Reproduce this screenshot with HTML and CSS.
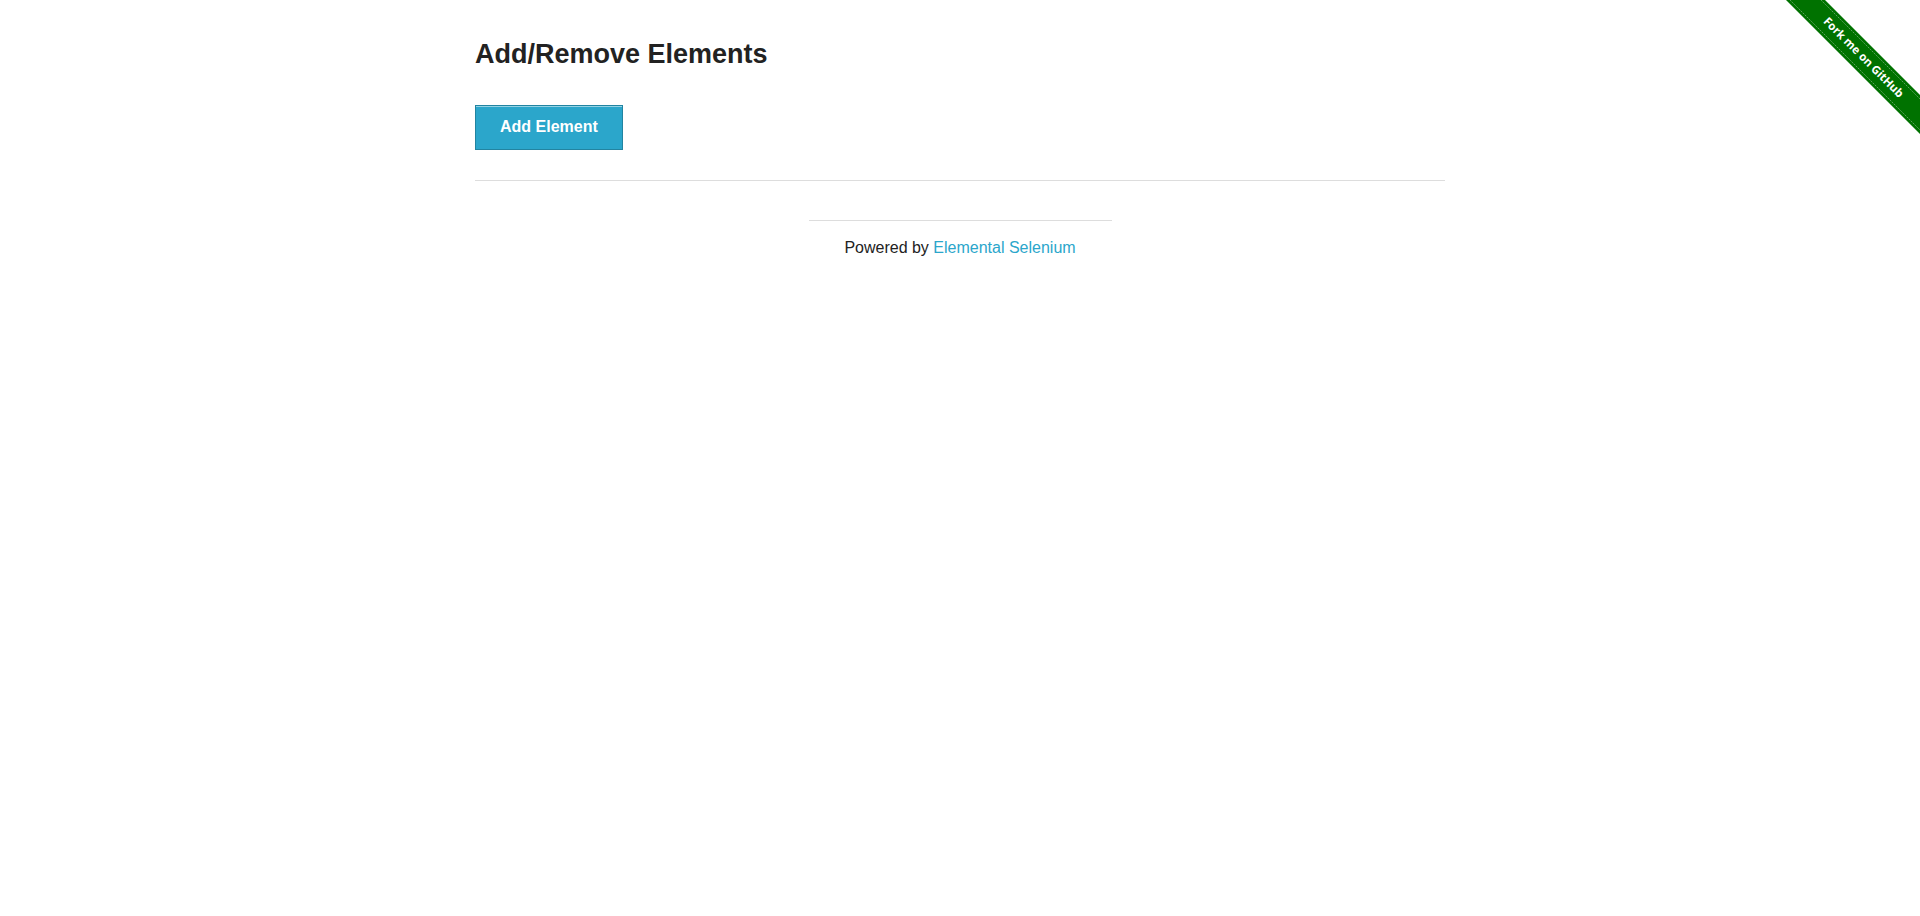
FILE: index.html
```html
<!DOCTYPE html>
<html>
<head>
<meta charset="utf-8">
<title>The Internet</title>
<link rel="stylesheet" href="styles.css">
</head>
<body>
<a class="ribbon" href="#" aria-label="Fork me on GitHub">
  <svg width="149" height="149" viewBox="0 0 149 149" xmlns="http://www.w3.org/2000/svg">
    <polygon points="15,0 54,0 149,95 149,134" fill="#007200"/>
    <line x1="19" y1="0" x2="149" y2="130" stroke="#ffffff" stroke-opacity="0.35" stroke-width="1" stroke-dasharray="2 1"/>
    <line x1="50" y1="0" x2="149" y2="99" stroke="#ffffff" stroke-opacity="0.35" stroke-width="1" stroke-dasharray="2 1"/>
    <text x="93" y="57" transform="rotate(45 93 57)" text-anchor="middle" dominant-baseline="central" class="ribbon-text">Fork me on GitHub</text>
  </svg>
</a>
<div class="row">
  <div class="columns">
    <div class="example">
      <h3 class="title">Add/Remove Elements</h3>
      <button class="button" type="button">Add Element</button>
      <div class="elements"></div>
    </div>
    <hr class="rule content-rule">
  </div>
</div>
<div class="row">
  <div class="columns footer">
    <hr class="rule footer-rule">
    <div class="powered">Powered by <a class="link" href="#">Elemental Selenium</a></div>
  </div>
</div>
</body>
</html>
```
FILE: styles.css
```css
html, body {
  margin: 0;
  padding: 0;
  background: #ffffff;
  color: #222222;
  font-family: "Liberation Sans", Arial, Helvetica, sans-serif;
  font-size: 16px;
}

.ribbon {
  position: absolute;
  top: 0;
  right: 0;
  display: block;
  width: 149px;
  height: 149px;
}

.ribbon svg {
  display: block;
}

.ribbon-text {
  fill: #ffffff;
  font-family: "Open Sans", "DejaVu Sans", sans-serif;
  font-weight: 700;
  font-size: 11.5px;
}

.row {
  max-width: 1000px;
  margin: 0 auto;
}

.columns {
  padding: 0 15px;
}

.title {
  margin: 36px 0 31px;
  font-size: 27px;
  line-height: 1.4;
  font-weight: 700;
  color: #222222;
}

.button {
  display: inline-block;
  margin: 0;
  padding: 12px 24px 13px;
  font-family: "Liberation Sans", Arial, Helvetica, sans-serif;
  font-size: 16px;
  line-height: 18px;
  font-weight: 700;
  color: #ffffff;
  background: #2ba6cb;
  border: 1px solid #2284a1;
  box-shadow: inset 0 1px 0 rgba(255, 255, 255, 0.5);
  cursor: pointer;
}

.rule {
  height: 0;
  border: solid #dddddd;
  border-width: 1px 0 0;
}

.content-rule {
  margin: 30px 0 0;
}

.footer {
  max-width: 303px;
  margin: 0 auto;
}

.footer-rule {
  margin: 39px 0 19px;
}

.powered {
  text-align: center;
  line-height: 1;
}

.link {
  color: #2ba6cb;
  text-decoration: none;
}
```
